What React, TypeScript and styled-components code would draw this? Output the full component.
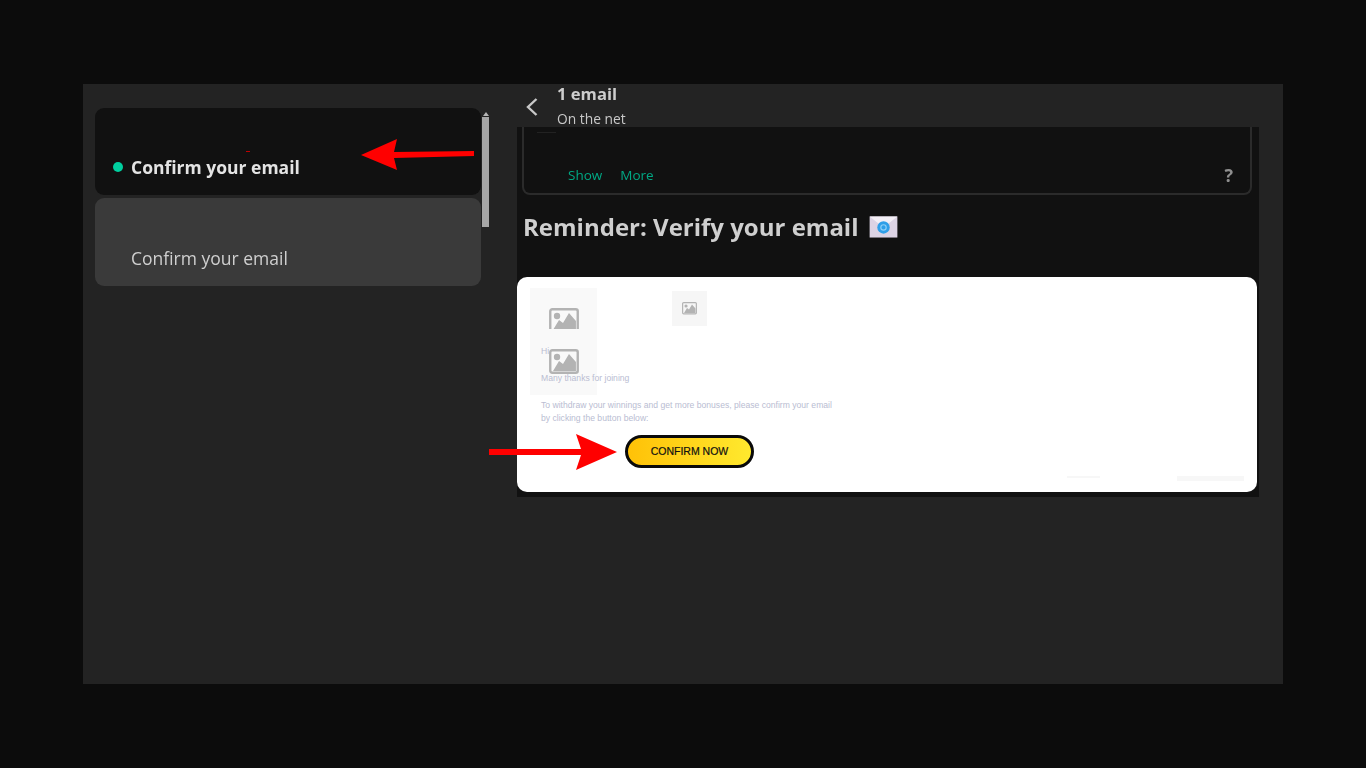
import React from 'react';
import styled, { createGlobalStyle } from 'styled-components';

const GlobalStyle = createGlobalStyle`
  html, body {
    margin: 0;
    padding: 0;
    background: #0c0c0c;
    font-family: "Open Sans", "Noto Sans", sans-serif;
  }
`;

const ImageIcon: React.FC<{ size: number }> = ({ size }) => (
  <svg width={size} height={size * 0.83} viewBox="0 0 30 25" fill="none">
    <rect x="1.2" y="1.2" width="27.6" height="22.6" rx="2" stroke="#b3b3b3" strokeWidth="2.4" />
    <circle cx="8" cy="8" r="3.2" fill="#b3b3b3" />
    <path d="M4 22 L10 12 L14 15 L20 5 L27 13 V22 Z" fill="#b3b3b3" />
  </svg>
);

const App: React.FC = () => {
  return (
    <Page>
      <GlobalStyle />
      <Panel>
        <Sidebar>
          <MailList>
            <MailItem $active>
              <UnreadDot />
              <ItemText $active>Confirm your email</ItemText>
            </MailItem>
            <MailItem>
              <ItemText>Confirm your email</ItemText>
            </MailItem>
          </MailList>
          <ScrollTrack>
            <ScrollUp />
            <ScrollThumb />
          </ScrollTrack>
        </Sidebar>

        <Reader>
          <ReaderHeader>
            <BackIcon width="14" height="20" viewBox="0 0 14 20" fill="none">
              <path d="M11.5 2 L3 10 L11.5 18" stroke="#c8c8c8" strokeWidth="2.4" />
            </BackIcon>
            <HeaderText>
              <HeaderTitle>1 email</HeaderTitle>
              <HeaderSub>On the net</HeaderSub>
            </HeaderText>
          </ReaderHeader>

          <MessageArea>
            <Notice>
              <NoticeMark />
              <NoticeRow>
                <NoticeLinks>
                  <NoticeLink>Show</NoticeLink>
                  <NoticeLink>More</NoticeLink>
                </NoticeLinks>
                <HelpMark>?</HelpMark>
              </NoticeRow>
            </Notice>

            <Subject>
              Reminder: Verify your email
              <svg width="29" height="22" viewBox="0 0 30 23">
                <rect x="0.5" y="0.5" width="29" height="22" fill="#dcd3e4" />
                <path d="M0.5 0.5 H29.5 L15 12 Z" fill="#f3eff6" />
                <circle cx="15" cy="12" r="6.5" fill="#2f9fe8" />
                <circle cx="15" cy="12" r="2.8" fill="none" stroke="#8fd0f7" strokeWidth="1.2" />
              </svg>
            </Subject>

            <MailCard>
              <TallPlaceholder>
                <ClippedIcon>
                  <ImageIcon size={30} />
                </ClippedIcon>
                <ImageIcon size={30} />
              </TallPlaceholder>
              <SmallPlaceholder>
                <ImageIcon size={15} />
              </SmallPlaceholder>

              <Greeting>Hi</Greeting>
              <BodyLine>Many thanks for joining</BodyLine>
              <BodyBlock>
                To withdraw your winnings and get more bonuses, please confirm your email
                <br />
                by clicking the button below:
              </BodyBlock>
              <ConfirmButton>CONFIRM NOW</ConfirmButton>

              <FaintBar $left={550} $width={33} $height={2} />
              <FaintBar $left={660} $width={67} $height={5} />
            </MailCard>
          </MessageArea>
        </Reader>

        <ArrowLeft width="113" height="32" viewBox="0 0 113 32">
          <path d="M0 16 L36 0 L33 13 L113 12 V17 L33 19 L36 31 Z" fill="#f00" />
        </ArrowLeft>
        <RedSpeck />
        <ArrowRight width="130" height="38" viewBox="0 0 130 38">
          <path d="M0 15 H92 L87 0 L128 18 L87 36 L92 21 H0 Z" fill="#f00" />
        </ArrowRight>
      </Panel>
    </Page>
  );
};

const Page = styled.div`
  min-height: 100vh;
  display: flex;
  align-items: center;
  justify-content: center;
  background: #0c0c0c;
`;

const Panel = styled.div`
  position: relative;
  width: 1200px;
  height: 600px;
  background: #232323;
  display: flex;
  overflow: hidden;
`;

const Sidebar = styled.aside`
  width: 434px;
  flex-shrink: 0;
  box-sizing: border-box;
  padding: 24px 0 0 12px;
  display: flex;
  gap: 1px;
  align-items: flex-start;
`;

const MailList = styled.div`
  width: 386px;
  display: flex;
  flex-direction: column;
  gap: 3px;
`;

const MailItem = styled.div<{ $active?: boolean }>`
  height: ${(p) => (p.$active ? '87px' : '88px')};
  box-sizing: border-box;
  padding: 0 0 17px 18px;
  display: flex;
  align-items: flex-end;
  gap: 8px;
  border-radius: 9px;
  background: ${(p) => (p.$active ? '#111111' : '#3a3a3a')};
`;

const UnreadDot = styled.span`
  width: 10px;
  height: 10px;
  margin-bottom: 6px;
  border-radius: 50%;
  background: #00cf9f;
`;

const ItemText = styled.span<{ $active?: boolean }>`
  font-size: 17.5px;
  line-height: 22px;
  font-weight: ${(p) => (p.$active ? 700 : 400)};
  color: ${(p) => (p.$active ? '#e4e4e4' : '#cfcfcf')};
  margin-left: ${(p) => (p.$active ? '0' : '18px')};
  filter: blur(0.3px);
`;

const ScrollTrack = styled.div`
  width: 7px;
  padding-top: 4px;
  display: flex;
  flex-direction: column;
  align-items: center;
  gap: 1px;
`;

const ScrollUp = styled.span`
  width: 0;
  height: 0;
  border-left: 3px solid transparent;
  border-right: 3px solid transparent;
  border-bottom: 4px solid #b5b5b5;
`;

const ScrollThumb = styled.span`
  width: 7px;
  height: 110px;
  background: #a6a6a6;
`;

const Reader = styled.section`
  width: 742px;
  display: flex;
  flex-direction: column;
`;

const ReaderHeader = styled.header`
  height: 43px;
  flex-shrink: 0;
  box-sizing: border-box;
  padding: 1px 0 0 8px;
  display: flex;
  align-items: flex-start;
  gap: 18px;
  filter: blur(0.5px);
`;

const BackIcon = styled.svg`
  flex-shrink: 0;
  margin-top: 12px;
`;

const HeaderText = styled.div`
  display: flex;
  flex-direction: column;
  gap: 8px;
`;

const HeaderTitle = styled.div`
  font-size: 16.6px;
  line-height: 18px;
  font-weight: 700;
  color: #cdcdcd;
`;

const HeaderSub = styled.div`
  font-size: 13.8px;
  line-height: 16px;
  color: #c8c8c8;
`;

const MessageArea = styled.div`
  height: 370px;
  background: #111111;
  display: flex;
  flex-direction: column;
`;

const Notice = styled.div`
  position: relative;
  height: 68px;
  box-sizing: border-box;
  margin: 0 7px 0 5px;
  border: 2px solid #2b2b2b;
  border-top: 0;
  border-radius: 0 0 8px 8px;
  display: flex;
  align-items: flex-end;
  padding: 0 17px 8px 44px;
  filter: blur(0.5px);
`;

const NoticeMark = styled.span`
  position: absolute;
  top: 5px;
  left: 13px;
  width: 19px;
  height: 1px;
  background: #222222;
`;

const NoticeRow = styled.div`
  flex: 1;
  display: flex;
  align-items: center;
  justify-content: space-between;
`;

const NoticeLinks = styled.div`
  display: flex;
  gap: 18px;
`;

const NoticeLink = styled.span`
  font-size: 13.5px;
  line-height: 20px;
  color: #00a884;
`;

const HelpMark = styled.span`
  font-size: 18px;
  line-height: 20px;
  font-weight: 700;
  color: #8f8f8f;
`;

const Subject = styled.h1`
  margin: 14px 0 0 6px;
  height: 36px;
  display: flex;
  align-items: center;
  gap: 10px;
  font-size: 24px;
  line-height: 36px;
  font-weight: 700;
  color: #cfcfcf;
  filter: blur(0.5px);
`;

const MailCard = styled.div`
  position: relative;
  margin-top: 32px;
  width: 740px;
  height: 215px;
  flex-shrink: 0;
  box-sizing: border-box;
  padding: 68px 0 0 24px;
  background: #ffffff;
  border-radius: 10px;
  font-family: "Liberation Sans", Arial, sans-serif;
  color: #b9bdd2;
  overflow: hidden;
`;

const TallPlaceholder = styled.div`
  position: absolute;
  left: 13px;
  top: 11px;
  width: 67px;
  height: 107px;
  background: #f9f9f9;
  display: flex;
  flex-direction: column;
  align-items: flex-start;
  padding: 20px 0 0 19px;
  box-sizing: border-box;
  gap: 20px;
`;

const ClippedIcon = styled.div`
  height: 21px;
  overflow: hidden;
`;

const SmallPlaceholder = styled.div`
  position: absolute;
  left: 155px;
  top: 14px;
  width: 35px;
  height: 35px;
  background: #f6f6f6;
  display: flex;
  align-items: center;
  justify-content: center;
`;

const Greeting = styled.p`
  position: relative;
  margin: 0;
  font-size: 8.6px;
  line-height: 12px;
`;

const BodyLine = styled.p`
  position: relative;
  margin: 15px 0 0;
  font-size: 8.6px;
  line-height: 12px;
`;

const BodyBlock = styled.p`
  margin: 15px 0 0;
  font-size: 8.6px;
  line-height: 13px;
`;

const ConfirmButton = styled.button`
  display: block;
  margin: 10px 0 0 84px;
  width: 129px;
  height: 33px;
  box-sizing: border-box;
  padding: 0 0 2px;
  border: 3px solid #0a0a0a;
  border-radius: 17px;
  background: linear-gradient(90deg, #ffc107, #ffe92e);
  font-family: "Liberation Sans", Arial, sans-serif;
  font-size: 10.5px;
  font-weight: 400;
  color: #111111;
  -webkit-text-stroke: 0.2px #111111;
`;

const FaintBar = styled.span<{ $left: number; $width: number; $height: number }>`
  position: absolute;
  top: 199px;
  left: ${(p) => p.$left}px;
  width: ${(p) => p.$width}px;
  height: ${(p) => p.$height}px;
  background: #f7f7f7;
`;

const ArrowLeft = styled.svg`
  position: absolute;
  left: 278px;
  top: 55px;
`;

const RedSpeck = styled.span`
  position: absolute;
  left: 163px;
  top: 67px;
  width: 4px;
  height: 1px;
  background: #c00000;
`;

const ArrowRight = styled.svg`
  position: absolute;
  left: 406px;
  top: 350px;
`;

export default App;
